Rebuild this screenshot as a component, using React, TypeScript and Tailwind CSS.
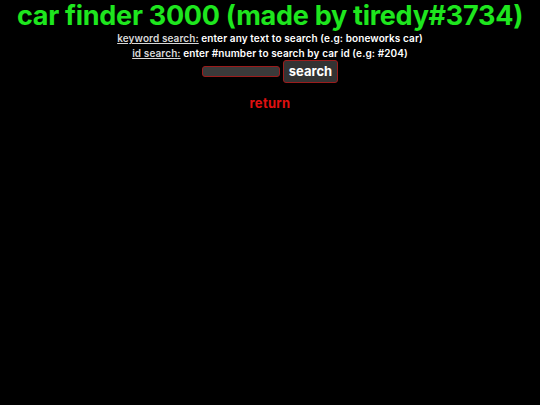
import React from 'react';

export default function App() {
  return (
    <div className="min-h-[405px] w-full bg-black text-center text-white" style={{ fontFamily: 'Inter, "Noto Sans", sans-serif' }}>
      <h1 className="pt-[1px] text-[27px] font-bold leading-[30px] tracking-[-0.27px] text-[#1ee61e]">
        car finder 3000 (made by tiredy#3734)
      </h1>
      <div className="text-[10px] font-semibold leading-[15px] tracking-[0.1px]">
        <p>
          <span className="text-[#d8d8d8] underline">keyword search:</span> enter any text to search (e.g: boneworks car)
        </p>
        <p>
          <span className="text-[#d8d8d8] underline">id search:</span> enter #number to search by car id (e.g: #204)
        </p>
      </div>
      <div className="mt-[-1px] flex items-center justify-center gap-[3px]">
        <input className="h-[11px] w-[78px] rounded-[3px] border border-[#9b1c1c] bg-[#3a3a3a] outline-none" />
        <button className="h-[23px] rounded-[3px] border border-[#9b1c1c] bg-[#333] px-[5px] text-[13px] font-bold leading-none text-white">
          search
        </button>
      </div>
      <div className="mt-[12px] text-[13px] font-bold leading-[16px] tracking-[0.3px] text-[#e01010]">return</div>
    </div>
  );
}
